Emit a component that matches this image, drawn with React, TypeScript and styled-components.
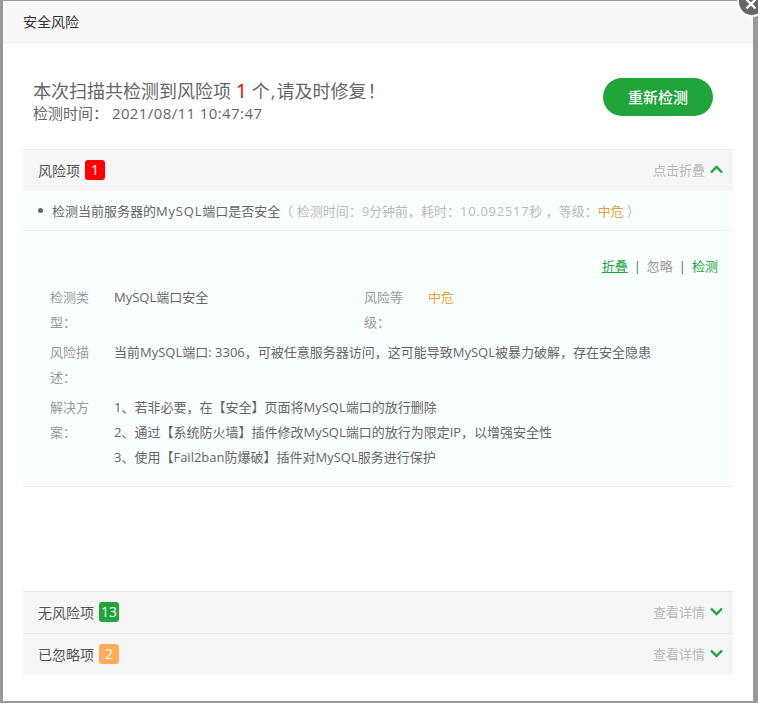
import React from 'react';
import styled, { createGlobalStyle } from 'styled-components';

const GlobalStyle = createGlobalStyle`
  html, body {
    margin: 0;
    padding: 0;
    height: 708px;
    overflow: hidden;
    background: #fff;
    font-family: "Open Sans", "Noto Sans CJK SC", sans-serif;
  }
`;

const Backdrop = styled.div`
  box-sizing: border-box;
  width: 758px;
  height: 703px;
  padding: 1px 5px 2px 3px;
  background: #999;
`;

const Modal = styled.div`
  position: relative;
  display: flex;
  flex-direction: column;
  width: 750px;
  height: 700px;
  background: #fff;
`;

const CloseButton = styled.div`
  position: absolute;
  top: -12px;
  left: 736px;
  display: flex;
  align-items: center;
  justify-content: center;
  width: 26px;
  height: 26px;
  border-radius: 50%;
  background: #666;
  box-shadow: 0 0 0 2px #fff;
  svg {
    position: relative;
    top: 2px;
    left: -1px;
  }
`;

const Header = styled.div`
  box-sizing: border-box;
  height: 42px;
  padding-left: 20px;
  background: #f8f8f8;
  border-bottom: 1px solid #eee;
  font-size: 14px;
  line-height: 42px;
  color: #333;
`;

const Summary = styled.div`
  display: flex;
  align-items: center;
  justify-content: space-between;
  height: 106px;
  padding: 0 40px 0 30px;
  box-sizing: border-box;
`;

const SummaryText = styled.div`
  display: flex;
  flex-direction: column;
  margin-top: 10px;
`;

const Title = styled.div`
  font-size: 18px;
  line-height: 23px;
  color: #666;
  white-space: nowrap;
`;

const RiskCount = styled.span`
  font-size: 20px;
  color: #f00;
`;

const Punct = styled.span`
  padding: 0 1px;
`;

const ScanTime = styled.div`
  font-size: 15px;
  line-height: 20px;
  color: #666;
  white-space: nowrap;
`;

const Digits = styled.span<{ $spacing: string }>`
  letter-spacing: ${(p) => p.$spacing};
`;

const RecheckButton = styled.div`
  width: 110px;
  height: 38px;
  margin-top: 2px;
  border-radius: 19px;
  background: #20a53a;
  color: #fff;
  font-size: 15px;
  font-weight: 500;
  line-height: 38px;
  text-align: center;
`;

const Content = styled.div`
  display: flex;
  flex: 1;
  flex-direction: column;
  padding: 0 20px 26px;
`;

const SectionHead = styled.div<{ $pushed?: boolean }>`
  box-sizing: border-box;
  display: flex;
  align-items: center;
  justify-content: space-between;
  height: 42px;
  padding: 0 10px 2px 15px;
  margin-top: ${(p) => (p.$pushed ? 'auto' : '0')};
  background: #f6f6f6;
  border-top: 1px solid #e9e9e9;
`;

const SectionName = styled.div`
  display: flex;
  align-items: center;
  font-size: 14px;
  color: #555;
`;

const Badge = styled.span<{ $color: string }>`
  width: 20px;
  height: 20px;
  margin-left: 5px;
  border-radius: 3px;
  background: ${(p) => p.$color};
  color: #fff;
  font-size: 14px;
  line-height: 20px;
  text-align: center;
`;

const Toggle = styled.div`
  display: flex;
  align-items: center;
  gap: 5px;
  font-size: 13px;
  color: #bbb;
`;

const ItemRow = styled.div`
  box-sizing: border-box;
  display: flex;
  align-items: center;
  height: 40px;
  padding-left: 15px;
  background: #f9fffd;
  border-bottom: 1px solid #eee;
  font-size: 13px;
  color: #666;
  white-space: nowrap;
`;

const Bullet = styled.span`
  width: 5px;
  height: 5px;
  margin: -1px 9px 0 0;
  border-radius: 50%;
  background: #666;
`;

const Muted = styled.span`
  color: #bbb;
`;

const Level = styled.span`
  color: #e8a33a;
`;

const Detail = styled.div`
  box-sizing: border-box;
  height: 256px;
  padding: 23px 15px 0 27px;
  background: #f9fffd;
  border-bottom: 1px solid #eee;
  font-size: 13px;
  color: #666;
`;

const Actions = styled.div`
  display: flex;
  justify-content: flex-end;
  gap: 6px;
  height: 25px;
  margin-bottom: 6px;
  line-height: 25px;
`;

const ActionLink = styled.span<{ $active?: boolean; $muted?: boolean }>`
  color: ${(p) => (p.$muted ? '#999' : '#20a53a')};
  text-decoration: ${(p) => (p.$active ? 'underline' : 'none')};
`;

const Divider = styled.span`
  color: #666;
`;

const InfoRow = styled.div`
  display: flex;
  margin-bottom: 5px;
  line-height: 25px;
`;

const InfoLabel = styled.div`
  flex: none;
  width: 52px;
  margin-right: 12px;
  color: #999;
`;

const InfoValue = styled.div<{ $wide?: boolean }>`
  flex: none;
  width: ${(p) => (p.$wide ? 'auto' : '198px')};
  margin-right: ${(p) => (p.$wide ? '0' : '52px')};
  white-space: nowrap;
`;

function Chevron({ up }: { up?: boolean }) {
  return (
    <svg width="13" height="9" viewBox="0 0 13 9" fill="none">
      <polyline
        points={up ? '1,7.5 6.5,2 12,7.5' : '1,1.5 6.5,7 12,1.5'}
        stroke="#20a53a"
        strokeWidth="2.4"
      />
    </svg>
  );
}

export default function App() {
  return (
    <>
      <GlobalStyle />
      <Backdrop>
        <Modal>
          <CloseButton>
            <svg width="12" height="12" viewBox="0 0 12 12">
              <path d="M1.5 1.5 L10.5 10.5 M10.5 1.5 L1.5 10.5" stroke="#fff" strokeWidth="2.4" />
            </svg>
          </CloseButton>
          <Header>安全风险</Header>
          <Summary>
            <SummaryText>
              <Title>
                本次扫描共检测到风险项 <RiskCount>1</RiskCount> 个<Punct>,</Punct>请及时修复<Punct>！</Punct>
              </Title>
              <ScanTime>
                检测时间： <Digits $spacing="0.4px">2021/08/11 10:47:47</Digits>
              </ScanTime>
            </SummaryText>
            <RecheckButton>重新检测</RecheckButton>
          </Summary>
          <Content>
            <SectionHead>
              <SectionName>
                风险项<Badge $color="#f00">1</Badge>
              </SectionName>
              <Toggle>
                点击折叠
                <Chevron up />
              </Toggle>
            </SectionHead>
            <ItemRow>
              <Bullet />
              <span>
                检测当前服务器的<Digits $spacing="0.8px">MySQL</Digits>端口是否安全
              </span>
              <Muted>
                （ 检测时间：9分钟前，耗时：<Digits $spacing="0.7px">10.092517</Digits>秒 ，等级：<Level>中危</Level> ）
              </Muted>
            </ItemRow>
            <Detail>
              <Actions>
                <ActionLink $active>折叠</ActionLink>
                <Divider>|</Divider>
                <ActionLink $muted>忽略</ActionLink>
                <Divider>|</Divider>
                <ActionLink>检测</ActionLink>
              </Actions>
              <InfoRow>
                <InfoLabel>检测类型：</InfoLabel>
                <InfoValue>MySQL端口安全</InfoValue>
                <InfoLabel>风险等级：</InfoLabel>
                <InfoValue>
                  <Level>中危</Level>
                </InfoValue>
              </InfoRow>
              <InfoRow>
                <InfoLabel>风险描述：</InfoLabel>
                <InfoValue $wide>当前MySQL端口: 3306，可被任意服务器访问，这可能导致MySQL被暴力破解，存在安全隐患</InfoValue>
              </InfoRow>
              <InfoRow>
                <InfoLabel>解决方案：</InfoLabel>
                <InfoValue $wide>
                  <div>1、若非必要，在【安全】页面将MySQL端口的放行删除</div>
                  <div>2、通过【系统防火墙】插件修改MySQL端口的放行为限定IP，以增强安全性</div>
                  <div>3、使用【Fail2ban防爆破】插件对MySQL服务进行保护</div>
                </InfoValue>
              </InfoRow>
            </Detail>
            <SectionHead $pushed>
              <SectionName>
                无风险项<Badge $color="#20a53a">13</Badge>
              </SectionName>
              <Toggle>
                查看详情
                <Chevron />
              </Toggle>
            </SectionHead>
            <SectionHead>
              <SectionName>
                已忽略项<Badge $color="#ffad5b">2</Badge>
              </SectionName>
              <Toggle>
                查看详情
                <Chevron />
              </Toggle>
            </SectionHead>
          </Content>
        </Modal>
      </Backdrop>
    </>
  );
}
